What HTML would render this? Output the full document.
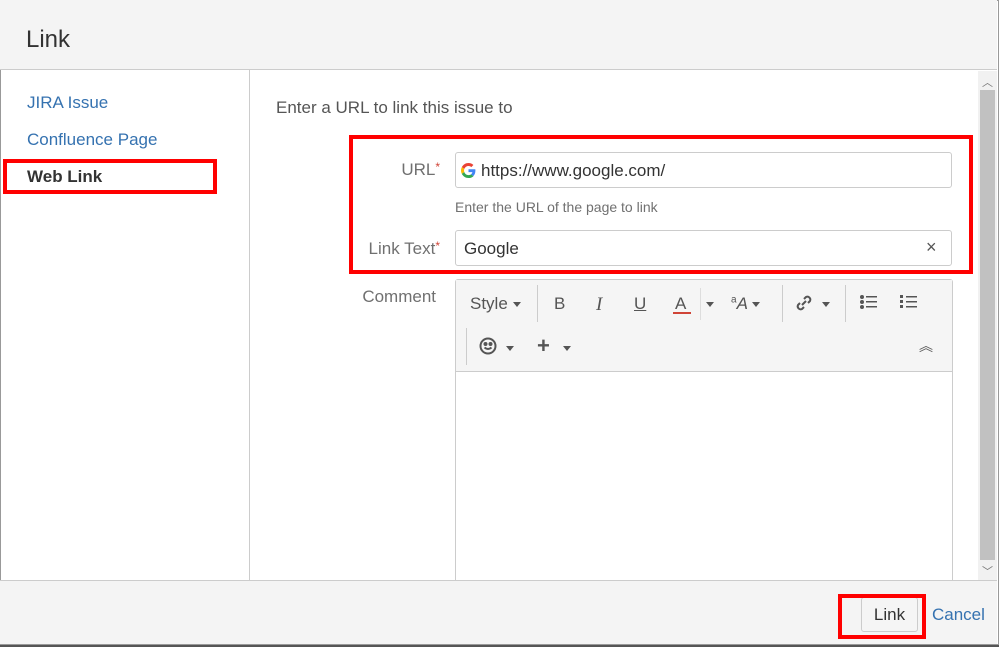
<!DOCTYPE html><html><head><style>
*{box-sizing:border-box;margin:0;padding:0}
body{width:999px;height:647px;overflow:hidden;background:#555;font-family:"Liberation Sans",sans-serif;position:relative}
.a{position:absolute}
.dlg{left:0;top:0;width:999px;height:645px;background:#fff;border:1px solid #999}
.hdr{left:0;top:0;width:997px;height:70px;background:#f4f4f4;border-bottom:1px solid #ccc}
.side{left:0;top:70px;width:250px;height:511px;border-right:1px solid #ccc}
.ftr{left:0;top:580px;width:997px;height:64px;background:#f4f4f4;border-top:1px solid #ccc}
.lnk{color:#3572b0;font-size:17px}
.lbl{color:#707070;font-size:17px;text-align:right;width:120px}
.star{color:#d04437;font-size:12px;vertical-align:top}
.inp{left:455px;width:497px;height:36px;border:1px solid #ccc;border-radius:3px;background:#fff;font-size:17px;color:#333}
.red{border:4px solid #f00}
.tb{color:#555;font-size:17px}
.sep{width:1px;background:#ccc}
.car{display:inline-block;border-left:4px solid transparent;border-right:4px solid transparent;border-top:5px solid #555;vertical-align:middle}
</style></head><body>
<div class="a dlg"></div>
<div class="a hdr"></div>
<div class="a" style="left:26px;top:26px;font-size:24px;color:#333">Link</div>
<div class="a side"></div>
<div class="a lnk" style="left:27px;top:93px">JIRA Issue</div>
<div class="a lnk" style="left:27px;top:130px">Confluence Page</div>
<div class="a" style="left:27px;top:167px;font-size:17px;font-weight:bold;color:#333">Web Link</div>
<div class="a red" style="left:3px;top:159px;width:214px;height:35px"></div>
<div class="a" style="left:276px;top:98px;font-size:17px;color:#555">Enter a URL to link this issue to</div>
<div class="a lbl" style="left:320px;top:160px">URL<span class="star">*</span></div>
<div class="a inp" style="top:152px"><svg class="a" style="left:5px;top:10px" width="15" height="15" viewBox="0 0 48 48"><path fill="#EA4335" d="M24 9.5c3.5 0 6.6 1.2 9 3.5l6.7-6.7C35.6 2.4 30.2 0 24 0 14.6 0 6.6 5.4 2.7 13.3l7.8 6C12.4 13.7 17.7 9.5 24 9.5z"/><path fill="#4285F4" d="M46.1 24.5c0-1.6-.1-3.1-.4-4.5H24v9h12.4c-.5 2.9-2.2 5.3-4.6 7l7.5 5.8c4.4-4 6.8-10 6.8-17.3z"/><path fill="#FBBC05" d="M10.5 28.7c-.5-1.5-.8-3-.8-4.7s.3-3.2.8-4.7l-7.8-6C1 16.6 0 20.2 0 24s1 7.4 2.7 10.7l7.8-6z"/><path fill="#34A853" d="M24 48c6.5 0 11.9-2.1 15.9-5.8l-7.5-5.8c-2.1 1.4-4.9 2.3-8.4 2.3-6.3 0-11.6-4.2-13.5-9.9l-7.8 6C6.6 42.6 14.6 48 24 48z"/></svg><span class="a" style="left:25px;top:8px">https://www.google.com/</span></div>
<div class="a" style="left:455px;top:199px;font-size:14px;color:#707070">Enter the URL of the page to link</div>
<div class="a lbl" style="left:320px;top:239px">Link Text<span class="star">*</span></div>
<div class="a inp" style="top:230px"><span class="a" style="left:8px;top:8px">Google</span><span class="a" style="left:470px;top:6px;color:#555;font-size:18px">×</span></div>
<div class="a red" style="left:349px;top:135px;width:624px;height:139px"></div>
<div class="a lbl" style="left:316px;top:287px">Comment</div>
<div class="a" style="left:455px;top:279px;width:498px;height:310px;border:1px solid #ccc;border-radius:3px;background:#fff"></div>
<div class="a" style="left:456px;top:280px;width:496px;height:92px;background:#f5f5f5;border-bottom:1px solid #ccc"></div>
<div class="a tb" style="left:470px;top:294px">Style <span class="car"></span></div>
<div class="a sep" style="left:537px;top:285px;height:37px"></div>
<div class="a tb" style="left:554px;top:294px">B</div>
<div class="a tb" style="left:596px;top:294px;font-style:italic;font-family:'Liberation Serif',serif;font-size:19px">I</div>
<div class="a tb" style="left:634px;top:294px;text-decoration:underline">U</div>
<div class="a tb" style="left:675px;top:294px">A</div>
<div class="a" style="left:673px;top:312px;width:18px;height:2px;background:#d04437"></div>
<div class="a sep" style="left:700px;top:288px;height:32px;background:#ddd"></div>
<div class="a" style="left:706px;top:296px"><span class="car"></span></div>
<div class="a tb" style="left:731px;top:294px;font-style:italic"><sup style="font-size:10px;font-style:normal">a</sup>A <span class="car"></span></div>
<div class="a sep" style="left:782px;top:285px;height:37px"></div>
<svg class="a" style="left:793px;top:292px" width="22" height="22" viewBox="0 0 22 22" fill="none" stroke="#555" stroke-width="2"><path d="M9 13l4-4M7 11l-2 2a3 3 0 004 4l2-2M15 11l2-2a3 3 0 00-4-4l-2 2"/></svg>
<div class="a" style="left:822px;top:296px"><span class="car"></span></div>
<div class="a sep" style="left:845px;top:285px;height:37px"></div>
<svg class="a" style="left:860px;top:295px" width="18" height="14"><g fill="#555"><circle cx="2" cy="2" r="2"/><circle cx="2" cy="7" r="2"/><circle cx="2" cy="12" r="2"/><rect x="6" y="1" width="11" height="1.5"/><rect x="6" y="6" width="11" height="1.5"/><rect x="6" y="11" width="11" height="1.5"/></g></svg>
<svg class="a" style="left:900px;top:295px" width="18" height="14"><g fill="#555"><rect x="0" y="0" width="3" height="3"/><rect x="0" y="5" width="3" height="3"/><rect x="0" y="10" width="3" height="3"/><rect x="6" y="1" width="11" height="1.5"/><rect x="6" y="6" width="11" height="1.5"/><rect x="6" y="11" width="11" height="1.5"/></g></svg>
<div class="a sep" style="left:466px;top:328px;height:37px"></div>
<svg class="a" style="left:479px;top:337px" width="18" height="18" fill="none" stroke="#555" stroke-width="2"><circle cx="9" cy="9" r="7.5"/><path d="M5.5 10.5q3.5 3 7 0"/><circle cx="6.5" cy="7" r="1" fill="#555"/><circle cx="11.5" cy="7" r="1" fill="#555"/></svg>
<div class="a" style="left:506px;top:340px"><span class="car"></span></div>
<div class="a" style="left:537px;top:333px;font-size:22px;font-weight:bold;color:#555">+</div>
<div class="a" style="left:563px;top:340px"><span class="car"></span></div>
<div class="a" style="left:919px;top:336px;font-size:14px;color:#555">︽</div>
<div class="a" style="left:978px;top:71px;width:19px;height:509px;background:#f1f1f1"></div>
<div class="a" style="left:980px;top:90px;width:15px;height:470px;background:#c1c1c1"></div>
<div class="a" style="left:982px;top:74px;font-size:11px;color:#777">︿</div>
<div class="a" style="left:982px;top:563px;font-size:11px;color:#777">﹀</div>
<div class="a ftr"></div>
<div class="a" style="left:861px;top:597px;width:57px;height:35px;border:1px solid #ccc;border-radius:3px;background:#f5f5f5;font-size:17px;color:#333;text-align:center;line-height:33px">Link</div>
<div class="a red" style="left:838px;top:594px;width:88px;height:45px"></div>
<div class="a lnk" style="left:932px;top:605px">Cancel</div>
</body></html>
